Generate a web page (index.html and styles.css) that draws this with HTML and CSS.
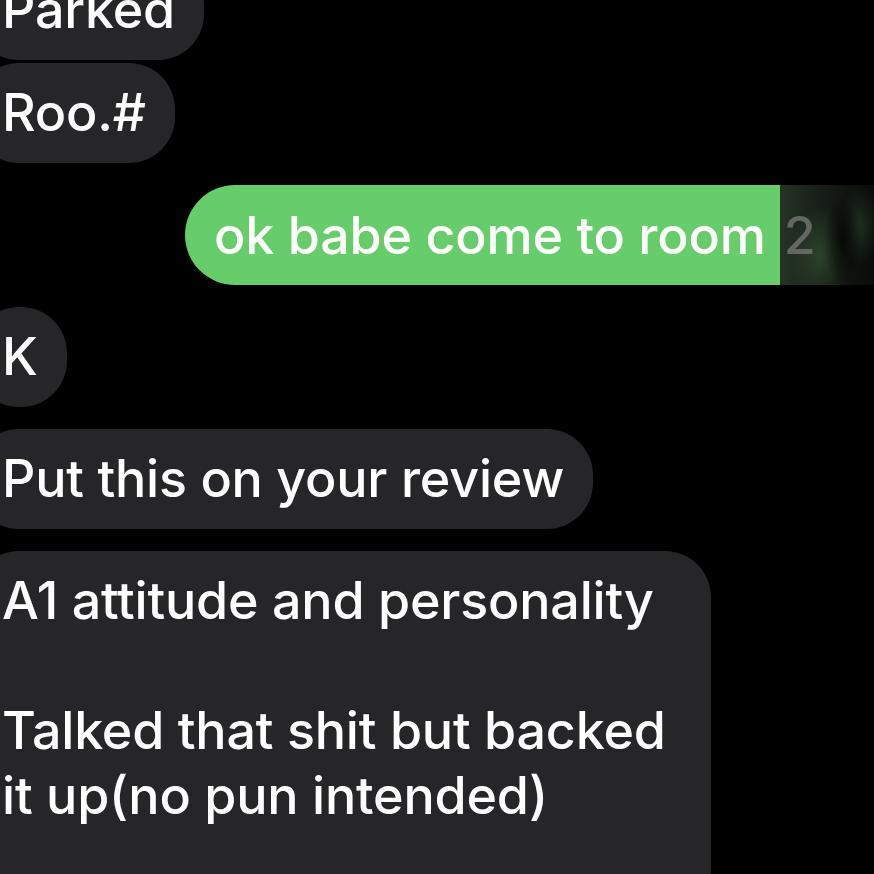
FILE: index.html
```html
<!DOCTYPE html>
<html lang="en">
<head>
    <meta charset="UTF-8">
    <meta name="viewport" content="width=device-width, initial-scale=1.0">
    <title>Messages</title>
    <link rel="stylesheet" href="styles.css">
</head>
<body>
    <div class="chat">
        <div class="row">
            <div class="bubble in">Parked</div>
        </div>
        <div class="row close">
            <div class="bubble in">Roo.#</div>
        </div>
        <div class="row out">
            <div class="bubble sent">ok babe come to room <span class="smudge"><span class="num">2</span></span></div>
        </div>
        <div class="row">
            <div class="bubble in">K</div>
        </div>
        <div class="row">
            <div class="bubble in">Put this on your review</div>
        </div>
        <div class="row">
            <div class="bubble in long">A1 attitude and personality<br><br>Talked that shit but backed<br>it up(no pun intended)<br><br></div>
        </div>
    </div>
</body>
</html>
```

FILE: styles.css
```css
*{
    margin: 0px;
    padding: 0px;
    box-sizing: border-box;
}
body {
    background-color: #000;
    overflow: hidden;
    height: 874px;
    font-family: Inter, 'Noto Sans', sans-serif;
}
.chat{
    display: flex;
    flex-direction: column;
    gap: 22px;
    margin-top: -40px;
    margin-left: -27px;
    margin-right: -200px;
}
.row{
    display: flex;
}
.row.close{
    margin-top: -19px;
}
.row.out{
    justify-content: flex-end;
}
.bubble {
    background-color: #262628;
    color: #fff;
    font-size: 52px;
    font-weight: 500;
    letter-spacing: -0.2px;
    line-height: 65px;
    padding: 17px 29px 18px 29px;
    border-radius: 46px;
    white-space: nowrap;
}
.bubble.long{
    width: 738px;
    border-radius: 46px 46px 0 0;
    padding-bottom: 60px;
}
.sent{
    background-color: #67cd6a;
    display: flex;
    align-items: center;
    padding: 0 0 0 29px;
    height: 100px;
    width: 889px;
    border-radius: 50px 0 0 50px;
}
.smudge{
    align-self: stretch;
    flex: 1;
    margin-left: 14px;
    display: flex;
    align-items: center;
    background:
        radial-gradient(ellipse 18px 45px at 62px 55px, rgba(0,0,0,0.7), transparent),
        radial-gradient(ellipse 30px 50px at 40px 70px, rgba(60,95,60,0.55), transparent),
        radial-gradient(ellipse 20px 40px at 80px 40px, rgba(50,80,50,0.45), transparent),
        linear-gradient(90deg, #263326 0px, #1a231a 30px, #0e130e 70px, #080a08 100px);
}
.num{
    color: #6f726f;
    padding-left: 4px;
    opacity: 0.85;
}
```
